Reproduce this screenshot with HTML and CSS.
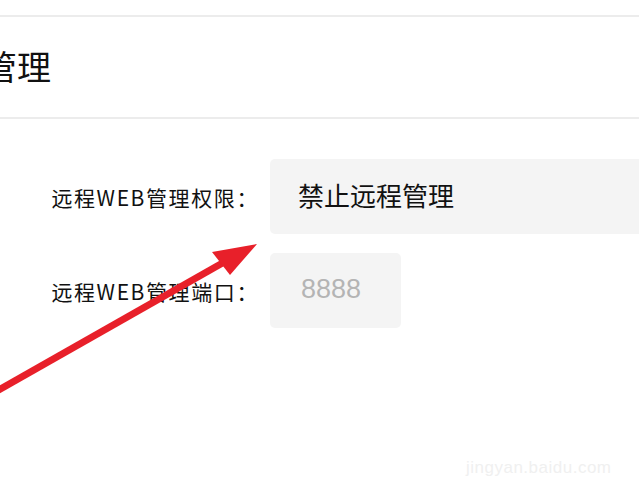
FILE: index.html
```html
<!DOCTYPE html>
<html lang="zh">
<head>
<meta charset="utf-8">
<link rel="stylesheet" href="styles.css">
</head>
<body>
<div class="page">
  <div class="topbar"></div>
  <header class="header"><h1 class="title">管理</h1></header>
  <main class="form">
    <div class="row">
      <label class="label">远程WEB管理权限：</label>
      <div class="field field-wide">禁止远程管理</div>
    </div>
    <div class="row">
      <label class="label">远程WEB管理端口：</label>
      <div class="field field-port">8888</div>
    </div>
  </main>
  <svg class="arrow" width="639" height="479" viewBox="0 0 639 479">
    <line x1="-10" y1="395" x2="226" y2="261" stroke="#e8202a" stroke-width="7" stroke-linecap="butt"/>
    <polygon points="257,244 212,252 230,275" fill="#e8202a"/>
  </svg>
  <div class="watermark">jingyan.baidu.com</div>
</div>
</body>
</html>
```
FILE: styles.css
```css
html, body {
  margin: 0;
  padding: 0;
  background: #ffffff;
}
.page {
  position: relative;
  width: 639px;
  height: 479px;
  overflow: hidden;
  font-family: "Noto Sans CJK SC", "Noto Sans", sans-serif;
  color: #111111;
}
.topbar {
  height: 15px;
  border-bottom: 2px solid #ececec;
}
.header {
  height: 100px;
  border-bottom: 2px solid #ececec;
  display: flex;
  align-items: center;
}
.title {
  margin: 0 0 0 -17px;
  font-size: 34px;
  font-weight: 400;
  line-height: 1;
  padding-bottom: 2px;
}
.form {
  padding-top: 40px;
  display: flex;
  flex-direction: column;
  gap: 19px;
}
.row {
  display: flex;
  align-items: center;
}
.label {
  flex: 0 0 270px;
  padding-right: 11px;
  box-sizing: border-box;
  text-align: right;
  font-size: 21px;
  letter-spacing: 1.6px;
  color: #111111;
  white-space: nowrap;
}
.field {
  flex: 0 0 auto;
  height: 75px;
  background: #f4f4f4;
  border-radius: 5px;
  display: flex;
  align-items: center;
  font-size: 26px;
  box-sizing: border-box;
  padding-bottom: 4px;
}
.field-wide {
  width: 400px;
  padding-left: 28px;
  color: #111111;
}
.field-port {
  width: 131px;
  padding-left: 31px;
  padding-bottom: 2px;
  color: #b4b4b4;
  font-family: "Liberation Sans", "Noto Sans", sans-serif;
  font-size: 27px;
}
.arrow {
  position: absolute;
  left: 0;
  top: 0;
}
.watermark {
  position: absolute;
  left: 466px;
  top: 458px;
  font-family: "Liberation Sans", sans-serif;
  font-size: 17px;
  color: #f0f0f0;
  letter-spacing: 0.5px;
}
```
